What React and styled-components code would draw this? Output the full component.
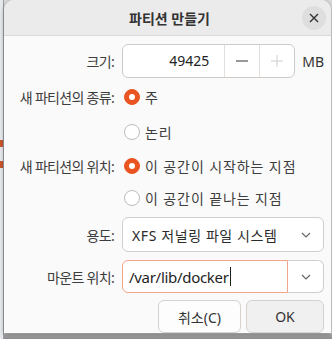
import React from 'react'
import styled, { createGlobalStyle } from 'styled-components'

const GlobalStyle = createGlobalStyle`
    html, body {
        margin: 0;
        padding: 0;
        background: #9a9a9a;
    }
    body {
        font-family: "Noto Sans", "Noto Sans CJK KR", sans-serif;
    }
`

const Screen = styled.div`
    width: 332px;
    height: 339px;
    display: flex;
    background: linear-gradient(#d9d9d9 0, #d9d9d9 333px, #a8a8a8 334px, #8d8d8d 339px);
    overflow: hidden;
`
const Backdrop = styled.div`
    width: 3px;
    display: flex;
    flex-direction: column;
    background: #e6e8ec;
    border-right: 1px solid #9aa0a8;
`
const Mark = styled.div`
    height: ${props => props.h}px;
    margin-top: ${props => props.top}px;
    background: ${props => props.color};
`
const Dialog = styled.div`
    width: 327px;
    height: 333px;
    background: #fafafa;
    border-radius: 10px 10px 0 0;
    box-shadow: 0 1px 4px rgba(0, 0, 0, 0.35);
    display: flex;
    flex-direction: column;
    color: #3d3d3d;
    font-size: 14px;
`
const Header = styled.div`
    height: 35px;
    flex-shrink: 0;
    background: #ebebeb;
    border-bottom: 1px solid #dadada;
    border-radius: 10px 10px 0 0;
    display: flex;
    align-items: center;
    justify-content: center;
    position: relative;
`
const Title = styled.div`
    font-weight: 700;
    font-size: 14px;
    color: #333;
    margin-left: 4px;
`
const Close = styled.div`
    position: absolute;
    right: 5px;
    top: 6px;
    width: 24px;
    height: 24px;
    border-radius: 50%;
    background: #dedede;
    display: flex;
    align-items: center;
    justify-content: center;
`
const Body = styled.div`
    padding: 8px 7px 0 0;
    display: flex;
    flex-direction: column;
`
const Row = styled.div`
    display: flex;
    align-items: center;
    height: ${props => props.h}px;
    margin-top: ${props => props.gap || 0}px;
`
const Label = styled.div`
    width: 110px;
    flex-shrink: 0;
    text-align: right;
    margin-right: 8px;
    white-space: nowrap;
    letter-spacing: -0.7px;
`
const Choice = styled.span`
    letter-spacing: 0.9px;
    white-space: nowrap;
`
const SpinBox = styled.div`
    width: 174px;
    height: 34px;
    box-sizing: border-box;
    border: 1px solid #cfcac5;
    border-radius: 6px;
    background: #fff;
    display: flex;
`
const SpinValue = styled.div`
    flex: 1;
    text-align: right;
    padding-right: 15px;
    line-height: 32px;
    color: #222;
`
const SpinButton = styled.div`
    width: 34px;
    border-left: 1px solid #e2dfdc;
    display: flex;
    align-items: center;
    justify-content: center;
`
const Unit = styled.div`
    margin-left: 7px;
    color: #333;
`
const Radio = styled.div`
    width: 16px;
    height: 16px;
    flex-shrink: 0;
    box-sizing: border-box;
    border-radius: 50%;
    margin-left: 2px;
    margin-right: 5px;
    display: flex;
    align-items: center;
    justify-content: center;
    background: ${props => (props.checked ? '#e95420' : '#fff')};
    border: 1px solid ${props => (props.checked ? '#e95420' : '#bdbdbd')};
    &::after {
        content: '';
        width: 6px;
        height: 6px;
        border-radius: 50%;
        background: #fff;
        display: ${props => (props.checked ? 'block' : 'none')};
    }
`
const Combo = styled.div`
    width: 202px;
    height: 35px;
    box-sizing: border-box;
    border: 1px solid #d3cec9;
    border-radius: 6px;
    background: #fff;
    display: flex;
    align-items: center;
    padding: 0 11px 0 9px;
    color: #2a2a2a;
`
const ComboText = styled.div`
    flex: 1;
    letter-spacing: 0.6px;
`
const MountBox = styled.div`
    width: 202px;
    height: 33px;
    display: flex;
`
const Entry = styled.div`
    width: 166px;
    box-sizing: border-box;
    border: 1.5px solid #f2a58a;
    border-radius: 6px 0 0 6px;
    background: #fff;
    display: flex;
    align-items: center;
    padding-left: 6px;
    font-size: 15px;
    letter-spacing: -0.3px;
    color: #1e1e1e;
`
const Caret = styled.span`
    display: inline-block;
    width: 1px;
    height: 19px;
    margin-left: 1px;
    background: #1e1e1e;
`
const EntryButton = styled.div`
    flex: 1;
    box-sizing: border-box;
    border: 1px solid #d3cec9;
    border-left: none;
    border-radius: 0 6px 6px 0;
    background: #fff;
    display: flex;
    align-items: center;
    justify-content: center;
`
const Actions = styled.div`
    display: flex;
    justify-content: flex-end;
    gap: 5px;
    margin-top: 7px;
`
const Button = styled.div`
    width: ${props => props.w}px;
    height: 33px;
    box-sizing: border-box;
    border: 1px solid #d6d1cc;
    border-radius: 6px;
    background: ${props => props.bg};
    display: flex;
    align-items: center;
    justify-content: center;
    color: #333;
`

const Chevron = () => (
    <svg width="12" height="8" viewBox="0 0 12 8">
        <path d="M2 2 L6 6 L10 2" fill="none" stroke="#666" strokeWidth="1.2" />
    </svg>
)

const App = () => {
    return (
        <>
            <GlobalStyle />
            <Screen>
                <Backdrop>
                    <Mark top={140} h={7} color="#c9552a" />
                    <Mark top={14} h={7} color="#c9552a" />
                </Backdrop>
                <Dialog>
                    <Header>
                        <Title>파티션 만들기</Title>
                        <Close>
                            <svg width="10" height="10" viewBox="0 0 10 10">
                                <path d="M1 1 L9 9 M9 1 L1 9" stroke="#333" strokeWidth="1.4" />
                            </svg>
                        </Close>
                    </Header>
                    <Body>
                        <Row h={34}>
                            <Label>크기:</Label>
                            <SpinBox>
                                <SpinValue>49425</SpinValue>
                                <SpinButton>
                                    <svg width="12" height="2" viewBox="0 0 12 2">
                                        <path d="M0 1 H12" stroke="#333" strokeWidth="1" />
                                    </svg>
                                </SpinButton>
                                <SpinButton>
                                    <svg width="12" height="12" viewBox="0 0 12 12">
                                        <path d="M0 6 H12 M6 0 V12" stroke="#cfcfcf" strokeWidth="1" />
                                    </svg>
                                </SpinButton>
                            </SpinBox>
                            <Unit>MB</Unit>
                        </Row>
                        <Row h={34} gap={2}>
                            <Label>새 파티션의 종류:</Label>
                            <Radio checked />
                            <Choice>주</Choice>
                        </Row>
                        <Row h={34} gap={1}>
                            <Label />
                            <Radio />
                            <Choice>논리</Choice>
                        </Row>
                        <Row h={32} gap={1}>
                            <Label>새 파티션의 위치:</Label>
                            <Radio checked />
                            <Choice>이 공간이 시작하는 지점</Choice>
                        </Row>
                        <Row h={32}>
                            <Label />
                            <Radio />
                            <Choice>이 공간이 끝나는 지점</Choice>
                        </Row>
                        <Row h={35} gap={3}>
                            <Label>용도:</Label>
                            <Combo>
                                <ComboText>XFS 저널링 파일 시스템</ComboText>
                                <Chevron />
                            </Combo>
                        </Row>
                        <Row h={33} gap={8}>
                            <Label>마운트 위치:</Label>
                            <MountBox>
                                <Entry>
                                    /var/lib/docker
                                    <Caret />
                                </Entry>
                                <EntryButton>
                                    <Chevron />
                                </EntryButton>
                            </MountBox>
                        </Row>
                        <Actions>
                            <Button w={83} bg="#fdfdfd">취소(C)</Button>
                            <Button w={78} bg="#f0f0f0">OK</Button>
                        </Actions>
                    </Body>
                </Dialog>
            </Screen>
        </>
    )
}

export default App
